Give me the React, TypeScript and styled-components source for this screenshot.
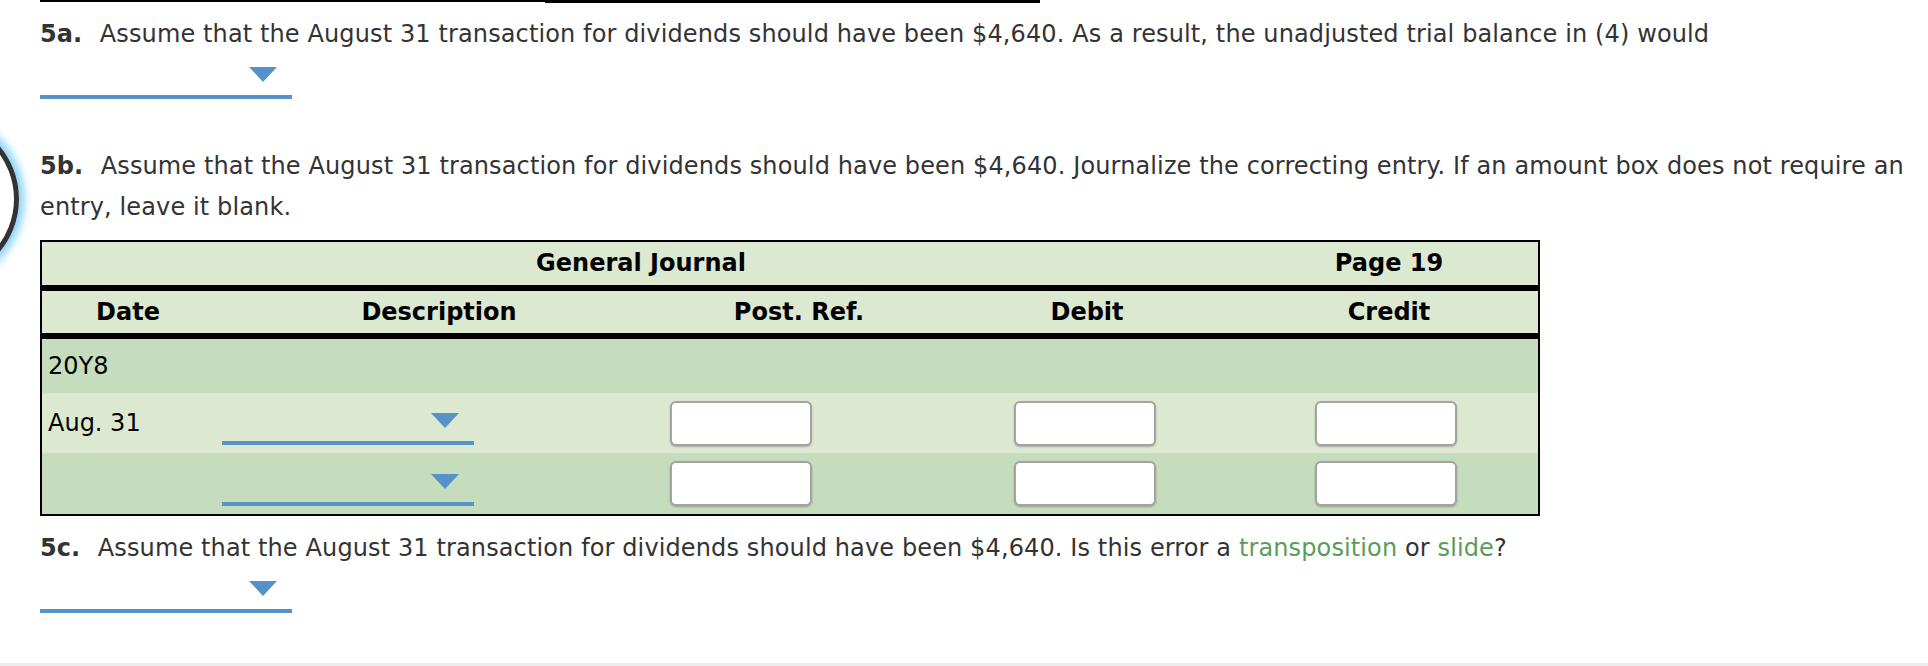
import React from 'react'
import styled, { createGlobalStyle } from 'styled-components'

const GlobalStyle = createGlobalStyle`
  html, body {
    margin: 0;
    padding: 0;
    background: #fff;
  }
  body {
    font-family: 'DejaVu Sans', Verdana, sans-serif;
  }
`

const BLUE = '#5592c9'
const LIGHT = '#dde8d1'
const DARK = '#c5dcbd'

const Page = styled.div`
  position: relative;
  display: flex;
  flex-direction: column;
  height: 666px;
  overflow: hidden;
  color: #333;
  font-size: 24px;
  line-height: 41px;
`

const Content = styled.div`
  padding: 0 8px 0 40px;
`

const TopRule = styled.div`
  display: flex;
  align-items: flex-start;
`

const RuleSegment = styled.div<{ $w: number; $h: number }>`
  width: ${p => p.$w}px;
  height: ${p => p.$h}px;
  background: #000;
`

const Question = styled.p<{ $top: number }>`
  margin: ${p => p.$top}px 0 0;
  letter-spacing: 0.12px;
`

const Label = styled.b`
  margin-right: 10px;
  color: #333;
  letter-spacing: 0;
`

const Term = styled.span`
  color: #5c9c5a;
`

const Dropdown = styled.div`
  box-sizing: border-box;
  width: 252px;
  height: 44px;
  padding: 12px 15px 0 0;
  display: flex;
  justify-content: flex-end;
  align-items: flex-start;
  border-bottom: 4px solid ${BLUE};
`

const Caret = styled.span`
  width: 0;
  height: 0;
  border-left: 14.5px solid transparent;
  border-right: 14.5px solid transparent;
  border-top: 15px solid ${BLUE};
`

const Journal = styled.div`
  box-sizing: border-box;
  width: 1500px;
  margin-top: 12px;
  border: 2px solid #000;
  color: #000;
`

const Row = styled.div<{ $h: number; $bg: string; $rule?: boolean }>`
  display: grid;
  grid-template-columns: 172px 450px 270px 306px 1fr;
  align-items: center;
  height: ${p => p.$h}px;
  background: ${p => p.$bg};
  border-bottom: ${p => (p.$rule ? '6px solid #000' : 'none')};
`

const HeadCell = styled.div<{ $span?: number }>`
  grid-column: span ${p => p.$span || 1};
  text-align: center;
  font-weight: bold;
`

const Cell = styled.div<{ $pad?: number }>`
  display: flex;
  align-items: center;
  padding-left: ${p => p.$pad || 0}px;
  height: 100%;
`

const AmountInput = styled.input`
  box-sizing: border-box;
  width: 142px;
  height: 45px;
  border: 2px solid #a3a3a3;
  border-radius: 6px;
  background: #fff;
  box-shadow: 0 1px 2px rgba(0, 0, 0, 0.25);
  font: inherit;
  padding: 0 8px;
  outline: none;
`

const FocusRing = styled.div`
  position: absolute;
  left: -145px;
  top: 117px;
  width: 164px;
  height: 164px;
  box-sizing: border-box;
  border: 5px solid #333;
  border-radius: 50%;
  box-shadow: 0 0 8px 5px rgba(110, 200, 255, 0.85);
`

const BottomBand = styled.div`
  margin-top: auto;
  height: 3px;
  background: #ececec;
`

const EntryRow: React.FC<{ date?: string; h: number; bg: string }> = ({
  date,
  h,
  bg,
}) => (
  <Row $h={h} $bg={bg}>
    <Cell $pad={6}>{date}</Cell>
    <Cell $pad={8}>
      <Dropdown>
        <Caret />
      </Dropdown>
    </Cell>
    <Cell $pad={6}>
      <AmountInput />
    </Cell>
    <Cell $pad={80}>
      <AmountInput />
    </Cell>
    <Cell $pad={75}>
      <AmountInput />
    </Cell>
  </Row>
)

export default function App() {
  return (
    <Page>
      <GlobalStyle />
      <FocusRing />
      <Content>
        <TopRule>
          <RuleSegment $w={505} $h={2} />
          <RuleSegment $w={495} $h={3} />
        </TopRule>

        <Question $top={11}>
          <Label>5a.</Label> Assume that the August 31 transaction for dividends
          should have been $4,640. As a result, the unadjusted trial balance in
          (4) would
        </Question>
        <Dropdown>
          <Caret />
        </Dropdown>

        <Question $top={47}>
          <Label>5b.</Label> Assume that the August 31 transaction for dividends
          should have been $4,640. Journalize the correcting entry. If an amount
          box does not require an entry, leave it blank.
        </Question>

        <Journal>
          <Row $h={43} $bg={LIGHT} $rule>
            <HeadCell $span={4}>General Journal</HeadCell>
            <HeadCell>Page 19</HeadCell>
          </Row>
          <Row $h={42} $bg={LIGHT} $rule>
            <HeadCell>Date</HeadCell>
            <HeadCell>Description</HeadCell>
            <HeadCell>Post. Ref.</HeadCell>
            <HeadCell>Debit</HeadCell>
            <HeadCell>Credit</HeadCell>
          </Row>
          <Row $h={54} $bg={DARK}>
            <Cell $pad={6}>20Y8</Cell>
          </Row>
          <EntryRow date="Aug. 31" h={60} bg={LIGHT} />
          <EntryRow h={61} bg={DARK} />
        </Journal>

        <Question $top={12}>
          <Label>5c.</Label> Assume that the August 31 transaction for dividends
          should have been $4,640. Is this error a <Term>transposition</Term> or{' '}
          <Term>slide</Term>?
        </Question>
        <Dropdown>
          <Caret />
        </Dropdown>
      </Content>
      <BottomBand />
    </Page>
  )
}
